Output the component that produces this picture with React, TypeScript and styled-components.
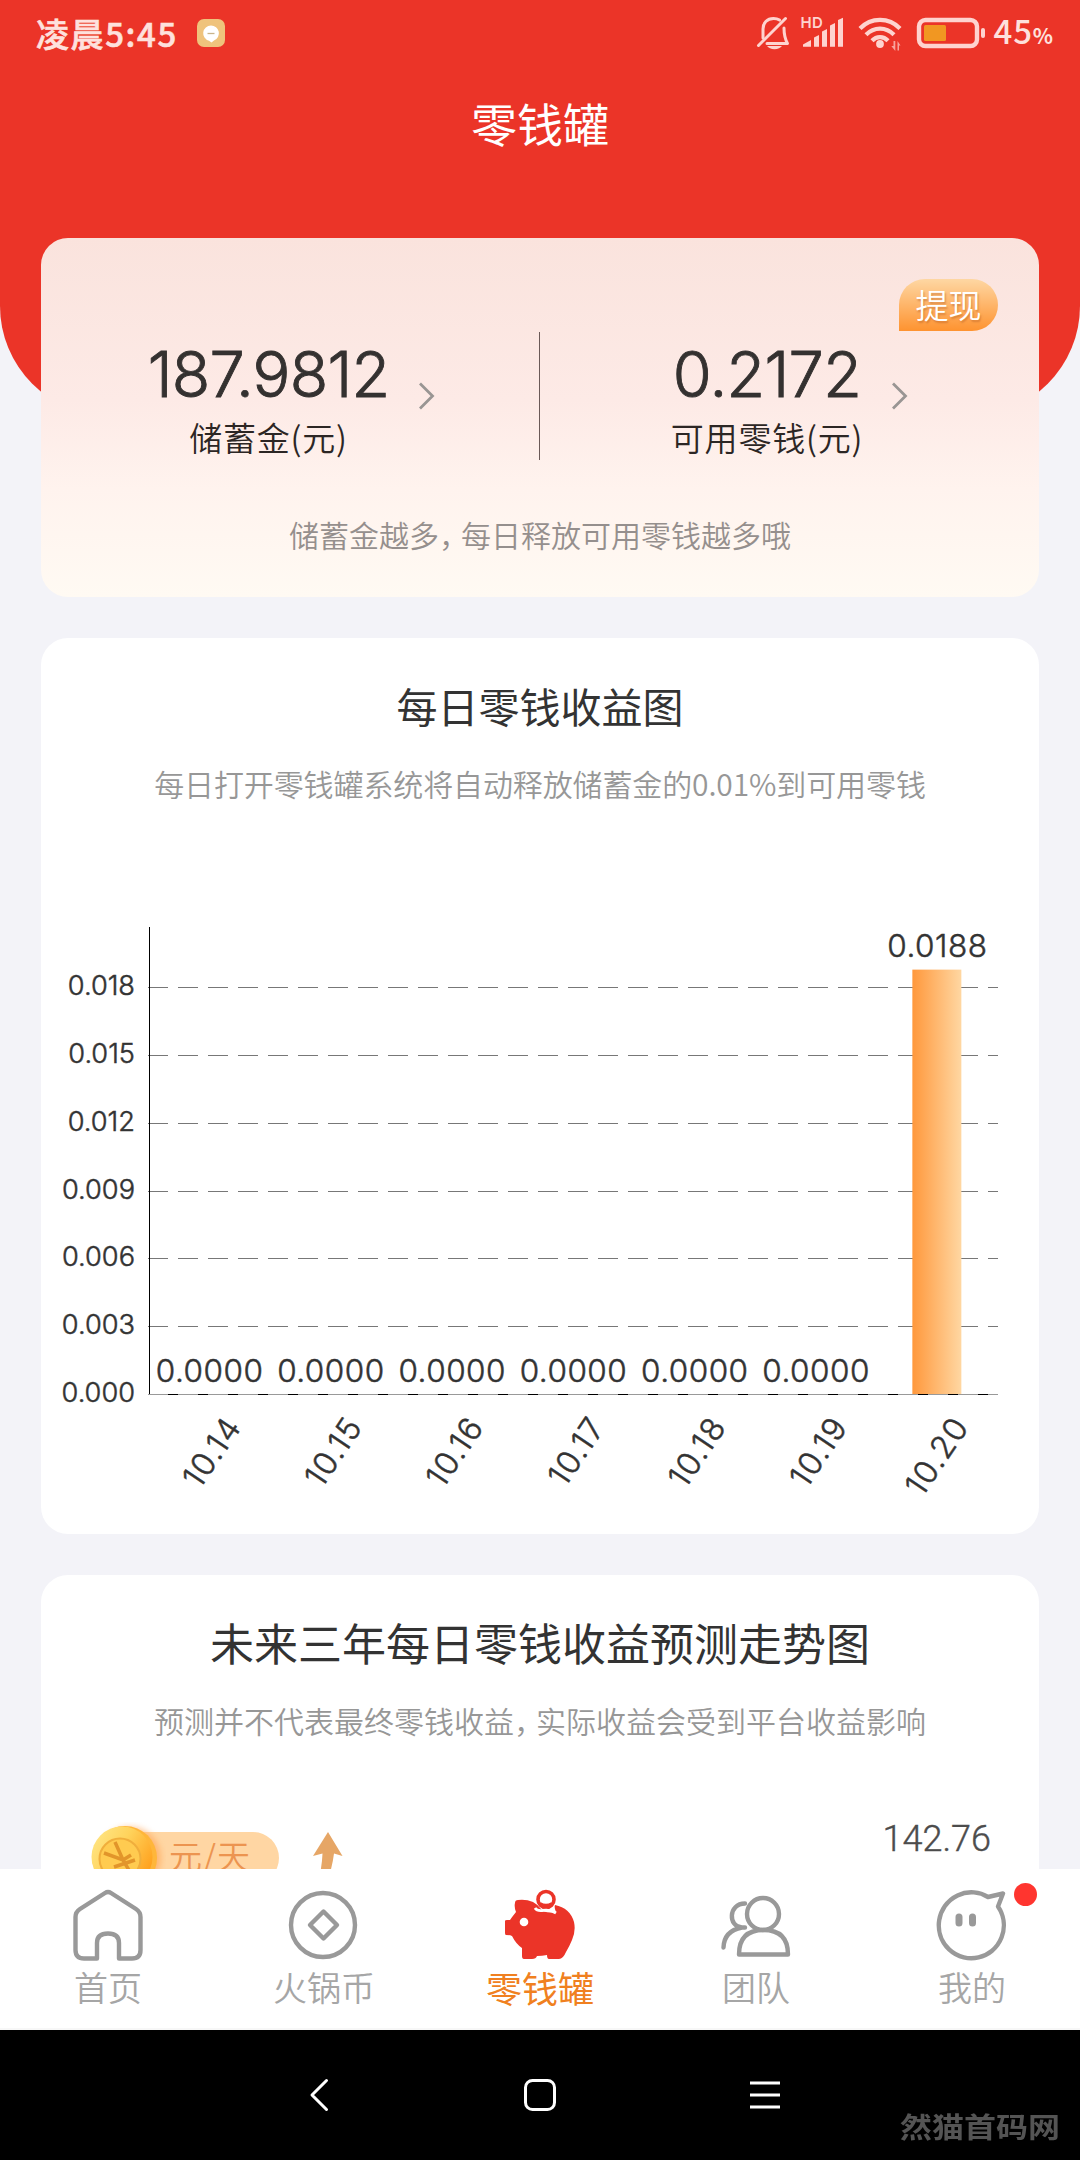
import React from 'react';
import styled, { createGlobalStyle } from 'styled-components';

const CJK = `"Noto Sans CJK SC", sans-serif`;
const NUM = `Inter, "Noto Sans CJK SC", sans-serif`;

const GlobalStyle = createGlobalStyle`
  * { box-sizing: border-box; }
  body { margin: 0; background: #f3f3f8; font-family: ${CJK}; }
  svg { display: block; flex: none; }
`;

const Screen = styled.div`
  width: 1080px;
  height: 2160px;
  display: flex;
  flex-direction: column;
  overflow: hidden;
`;

const Viewport = styled.main`
  height: 1869px;
  overflow: hidden;
  background: #f3f3f8;
`;

const Hero = styled.header`
  height: 416px;
  background: #eb3428;
  border-radius: 0 0 110px 110px;
`;

const StatusBar = styled.div`
  height: 66px;
  padding: 0 27px 0 36px;
  display: flex;
  justify-content: space-between;
  align-items: center;
  color: #fee1dd;
`;

const StatusSide = styled.div`
  display: flex;
  align-items: center;
`;

const Clock = styled.span`
  font: 500 33px/44px ${CJK};
  letter-spacing: 1.6px;
  -webkit-text-stroke: 0.6px #fee1dd;
  margin: -1px 0 0 0;
  width: 161px;
`;

const Percent = styled.span`
  display: flex;
  align-items: baseline;
  font: 500 33px/44px ${CJK};
  letter-spacing: 0.8px;
  margin: -1px 0 0 8px;
  small { font-size: 21px; font-weight: 700; letter-spacing: 0; }
`;

const PageTitle = styled.h1`
  margin: 33px 0 0;
  text-align: center;
  color: #fff;
  font: 400 46px/46px ${CJK};
`;

const Content = styled.div`
  margin-top: -178px;
  padding: 0 41px;
  display: flex;
  flex-direction: column;
  gap: 41px;
`;

const BalanceCard = styled.section`
  position: relative;
  height: 359px;
  border-radius: 27px;
  background: linear-gradient(180deg, #fae3dd 0%, #fdeae6 45%, #fff3ee 70%, #fffaf3 100%);
  padding-top: 94px;
`;

const WithdrawBadge = styled.button`
  position: absolute;
  top: 41px;
  right: 41px;
  width: 99px;
  height: 52px;
  padding: 0 0 2px;
  border: 0;
  border-radius: 27px 27px 27px 0;
  background: linear-gradient(180deg, #fed7a3 0%, #fe9330 100%);
  color: #fff;
  font: 350 33px/48px ${CJK};
  text-shadow: 1px 2px 2px rgba(190, 100, 40, 0.55);
`;

const Balances = styled.div`
  height: 128px;
  display: grid;
  grid-template-columns: 498px 1px 499px;
`;

const Separator = styled.i`
  background: #6a5957;
`;

const Balance = styled.div<{ $pad: number }>`
  display: flex;
  align-items: flex-start;
  padding-left: ${(p) => p.$pad}px;
`;

const BalanceText = styled.div<{ $w: number }>`
  width: ${(p) => p.$w}px;
  display: flex;
  flex-direction: column;
  align-items: center;
  white-space: nowrap;
`;

const Amount = styled.strong<{ $ls: number }>`
  font: 300 63px/84px ${NUM};
  -webkit-text-stroke: 0.9px #343130;
  letter-spacing: ${(p) => p.$ls}px;
  color: #343130;
`;

const AmountLabel = styled.span`
  margin-top: 1px;
  font: 350 33px/40px ${CJK};
  letter-spacing: 0.8px;
  color: #2c2624;
`;

const Chevron = styled.svg`
  margin: 49px 0 0 29px;
`;

const Hint = styled.p`
  margin: 54px 0 0;
  text-align: center;
  font: 350 30px/40px ${CJK};
  color: #958f8d;
`;

const Comma = styled.span`
  letter-spacing: -8px;
`;

const Card = styled.section<{ $h: number }>`
  height: ${(p) => p.$h}px;
  border-radius: 27px;
  background: #fff;
  padding-top: 37px;
`;

const CardTitle = styled.h2<{ $size: number }>`
  margin: 0;
  text-align: center;
  color: #333;
  font: 400 ${(p) => p.$size}px/60px ${CJK};
`;

const CardNote = styled.p<{ $tight?: boolean }>`
  margin: 28px 0 0;
  text-align: center;
  white-space: nowrap;
  color: #979797;
  font: 350 30px/40px ${CJK};
  letter-spacing: ${(p) => (p.$tight ? '-0.12px' : '0')};
`;

const ChartSvg = styled.svg`
  margin-top: 124px;
  fill: #333;
`;

const ChartText = styled.text`
  font-family: ${NUM};
  font-weight: 300;
  stroke: #333;
  stroke-width: 0.5px;
`;

const TrendRow = styled.div`
  margin-top: 85px;
  padding: 0 48px 0 51px;
  height: 80px;
  display: flex;
  align-items: flex-start;
`;

const UnitPill = styled.div`
  position: relative;
  margin-top: 7px;
  width: 187px;
  height: 52px;
  padding-left: 77px;
  border-radius: 26px;
  background: #ffd6a3;
  color: #ec9450;
  font: 350 33px/46px ${CJK};
  letter-spacing: 1px;
`;

const CoinSvg = styled.svg`
  position: absolute;
  left: -2px;
  top: -10px;
`;

const ArrowSvg = styled.svg`
  margin: 7px 0 0 34px;
`;

const Peak = styled.span`
  margin: -6px 0 0 auto;
  font: 300 36px/40px Roboto, sans-serif;
  -webkit-text-stroke: 0.4px #4c4c4c;
  color: #4c4c4c;
`;

const TabBar = styled.nav`
  height: 161px;
  background: #fff;
  border-bottom: 2px solid #f7f7f7;
  display: grid;
  grid-template-columns: repeat(5, 1fr);
`;

const Tab = styled.a<{ $active?: boolean }>`
  position: relative;
  display: flex;
  flex-direction: column;
  align-items: center;
  padding-top: 20px;
  font: ${(p) => (p.$active ? '400 36px' : '350 34px')}/50px ${CJK};
  color: ${(p) => (p.$active ? '#f08020' : '#a6a6a6')};
  span { margin-top: 1px; }
`;

const Dot = styled.i`
  position: absolute;
  left: 150px;
  top: 14px;
  width: 23px;
  height: 23px;
  border-radius: 50%;
  background: #ff352f;
`;

const SystemNav = styled.footer`
  position: relative;
  height: 130px;
  background: #000;
  display: flex;
  align-items: center;
  padding-left: 308px;
`;

const Gap = styled.i<{ $w: number }>`
  width: ${(p) => p.$w}px;
`;

const Watermark = styled.span`
  position: absolute;
  right: 20px;
  bottom: 15px;
  color: #545454;
  font: 700 32px/38px ${CJK};
  transform: scaleY(0.88);
`;

const DAYS = [
  ['10.14', 0], ['10.15', 0], ['10.16', 0], ['10.17', 0], ['10.18', 0], ['10.19', 0], ['10.20', 0.0188],
] as [string, number][];
const TICKS = [0, 0.003, 0.006, 0.009, 0.012, 0.015, 0.018];
const X0 = 108, X1 = 957, BASE = 467.5, STEP = 67.8;

function DailyChart() {
  const band = (X1 - X0) / DAYS.length;
  const yOf = (v: number) => BASE - (v / 0.003) * STEP;
  return (
    <ChartSvg width="998" height="600" viewBox="0 0 998 600">
      <defs>
        <linearGradient id="bar" x1="0" x2="1" y1="0" y2="0">
          <stop offset="0" stopColor="#ff983c" />
          <stop offset="1" stopColor="#ffd7a2" />
        </linearGradient>
      </defs>
      {TICKS.slice(1).map((t) => (
        <path key={t} d={`M${X0 - 1} ${Math.floor(yOf(t)) + 0.5}H${X1}`} stroke="#777" strokeDasharray="20 10" />
      ))}
      <path d={`M${X0 + 0.5} 0V${BASE + 0.5}`} stroke="#000" />
      {TICKS.map((t) => (
        <ChartText key={t} x="94" y={yOf(t) + 7.5} fontSize="27.200" textAnchor="end">{t.toFixed(3)}</ChartText>
      ))}
      {DAYS.map(([d, v], i) => {
        const cx = X0 + band * (i + 0.5);
        return (
          <g key={d}>
            {v > 0 && <rect x={cx - 25} y={yOf(v)} width="49" height={BASE - yOf(v)} fill="url(#bar)" />}
            <ChartText x={cx} y={yOf(v) - 13} fontSize="31.500" letterSpacing=".5" textAnchor="middle">{v.toFixed(4)}</ChartText>
            <ChartText transform={`translate(${cx + 33} ${BASE + 32}) rotate(-56)`} fontSize="32" letterSpacing="1.300" textAnchor="end">{d}</ChartText>
          </g>
        );
      })}
      <path d={`M${X0} ${BASE}H${X1}`} stroke="#000" />
      <path d={`M${X0 - 1} ${BASE}H${X1}`} stroke="#999" strokeDasharray="20 10" />
    </ChartSvg>
  );
}

const ChevronIcon = () => (
  <Chevron width="18" height="30" viewBox="0 0 18 30" fill="none" stroke="#999593" strokeWidth="2.800">
    <path d="M2 2.5L14.5 15L2 27.5" />
  </Chevron>
);

const line = { fill: 'none', stroke: '#999', strokeWidth: 4.4, strokeLinejoin: 'round', strokeLinecap: 'round' } as const;

function StatusIcons() {
  return (
    <svg width="230" height="44" viewBox="756 11 230 44" fill="#fed3cf">
      <g fill="none" stroke="#fed3cf" strokeWidth="3" strokeLinecap="round">
        <path d="M758.5 45.5L785.5 18.5" />
        <path d="M763 38V29c0-6 4-10.500 10.500-10.500 2.500 0 4.500.6 6 1.600" />
        <path d="M784 28c0 7 .5 10 3.500 15.500H767" strokeLinejoin="round" />
      </g>
      <path d="M767 46h15c-1.500 2-4 3.200-7.500 3.200s-6-1.200-7.500-3.200z" />
      <text x="800.5" y="28" fontSize="15" fontWeight="600" fontFamily="Inter, sans-serif" letterSpacing=".4">HD</text>
      <path d="M803 46.700V44.500L811 40V46.700zM814 46.700V37.500L819 35V46.700zM822 46.700V31.500L827 29V46.700zM830 46.700V25.500L835 23V46.700zM838 46.700V20L843 17.800V46.700z" />
      <g fill="none" stroke="#fed3cf" strokeWidth="4.200">
        <path d="M860 28.500C871 17 889 17 900 28.500" />
        <path d="M866 34.700c8-8.200 20-8.200 28 0" />
        <path d="M872 40.700c4.500-4.800 11.500-4.800 16 0" />
      </g>
      <circle cx="880" cy="44" r="3.900" />
      <path d="M893.500 41h1.800v10l-4-5h2.200zM897.500 41l3 4.500h-1.500v5h-1.500z" opacity=".7" />
      <rect x="919" y="20" width="58" height="26" rx="6.500" fill="none" stroke="#fed3cf" strokeWidth="4.400" />
      <rect x="924" y="25" width="22" height="16" rx="1.500" fill="#f19722" />
      <rect x="981" y="28" width="4" height="10" rx="2" />
    </svg>
  );
}

const Coin = () => (
  <CoinSvg width="76" height="76" viewBox="0 0 76 76">
    <defs>
      <linearGradient id="coinRim" x1="0" y1="0" x2="1" y2=".6">
        <stop offset="0" stopColor="#ffe98c" />
        <stop offset=".5" stopColor="#ffd35c" />
        <stop offset="1" stopColor="#ffa21f" />
      </linearGradient>
      <filter id="coinShade" x="-20%" y="-20%" width="150%" height="140%"><feGaussianBlur stdDeviation="3" /></filter>
    </defs>
    <circle cx="40" cy="36" r="31" fill="#ffa657" opacity=".65" filter="url(#coinShade)" />
    <circle cx="35" cy="36" r="32" fill="#ffb63a" />
    <circle cx="32" cy="35" r="30.500" fill="url(#coinRim)" />
    <circle cx="30" cy="37" r="20.500" fill="#ffcb50" stroke="#f0ae3c" strokeWidth="2" />
    <path d="M25 20L33 38L14 31M33 38L41 33M33 38L40 50M24 45L45 38" stroke="#e2952a" strokeWidth="3.500" fill="none" />
  </CoinSvg>
);

const Pig = () => (
  <svg width="72" height="72" viewBox="0 0 72 72">
    <path fill="#eb3428" d="M11 14Q11 11 14 11Q22 10 29 13Q33 15 37 20Q41 25 52 23Q50 19 51 16Q66 19 70 33Q72 42 68 51Q66 56 62 63Q59 70 55 70H45Q43 70 43 66Q38 67 33 67Q32 70 28 70H20Q18 70 18 67V59Q12 55 8 47Q6 46 2 46Q1 46 1 44V32Q1 31 3 31H6Q8 28 12 23Q10 18 11 14Z" />
    <circle cx="20" cy="33" r="4.300" fill="#fff" />
    <circle cx="42" cy="10.500" r="8" fill="#fff" stroke="#eb3428" strokeWidth="3.600" />
    <path d="M36 14.500Q42 18 48 14.500" stroke="#eb3428" strokeWidth="3" fill="none" />
    <path d="M31 19Q33 22 38 21.500Q46 20 52 24" stroke="#fff" strokeWidth="2.800" fill="none" />
  </svg>
);

export default function App() {
  return (
    <>
      <GlobalStyle />
      <Screen>
        <Viewport>
          <Hero>
            <StatusBar>
              <StatusSide>
                <Clock>凌晨5:45</Clock>
                <svg width="28" height="28" viewBox="0 0 28 28">
                  <rect width="28" height="28" rx="7" fill="#efc37c" />
                  <path d="M14 6.500a8 7.800 0 0 1 3 15L14.500 23.500L12 21.800A8 7.800 0 0 1 14 6.500z" fill="#fff" />
                  <path d="M10.500 14.500h7" stroke="#c9b48a" strokeWidth="1.300" />
                </svg>
              </StatusSide>
              <StatusSide>
                <StatusIcons />
                <Percent>45<small>%</small></Percent>
              </StatusSide>
            </StatusBar>
            <PageTitle>零钱罐</PageTitle>
          </Hero>
          <Content>
            <BalanceCard>
              <WithdrawBadge>提现</WithdrawBadge>
              <Balances>
                <Balance $pad={107}>
                  <BalanceText $w={241}>
                    <Amount $ls={-0.8}>187.9812</Amount>
                    <AmountLabel>储蓄金(元)</AmountLabel>
                  </BalanceText>
                  <ChevronIcon />
                </Balance>
                <Separator />
                <Balance $pad={132}>
                  <BalanceText $w={190}>
                    <Amount $ls={-0.7}>0.2172</Amount>
                    <AmountLabel>可用零钱(元)</AmountLabel>
                  </BalanceText>
                  <ChevronIcon />
                </Balance>
              </Balances>
              <Hint>储蓄金越多<Comma>，</Comma>每日释放可用零钱越多哦</Hint>
            </BalanceCard>

            <Card $h={896}>
              <CardTitle $size={41}>每日零钱收益图</CardTitle>
              <CardNote $tight>每日打开零钱罐系统将自动释放储蓄金的0.01%到可用零钱</CardNote>
              <DailyChart />
            </Card>

            <Card $h={500}>
              <CardTitle $size={44}>未来三年每日零钱收益预测走势图</CardTitle>
              <CardNote>预测并不代表最终零钱收益<Comma>，</Comma>实际收益会受到平台收益影响</CardNote>
              <TrendRow>
                <UnitPill><Coin />元/天</UnitPill>
                <ArrowSvg width="30" height="60" viewBox="0 0 30 60" fill="#e6a666">
                  <path d="M15 0L29.500 24L21 21.500Q19 38 12 55H4Q9 36 9.500 21.500L0 24Z" />
                </ArrowSvg>
                <Peak>142.76</Peak>
              </TrendRow>
            </Card>
          </Content>
        </Viewport>

        <TabBar>
          <Tab>
            <svg width="72" height="72" viewBox="0 0 72 72" {...line}>
              <path d="M25 69.500H12Q3.500 69.500 3.500 61V28Q3.500 23 8 20L33 4Q36 2 39 4L64 20Q68.500 23 68.500 28V61Q68.500 69.500 60 69.500H47V54Q47 44.500 36 44.500T25 54Z" stroke="none" />
              <path d="M25 69.500H12Q3.500 69.500 3.500 61V28Q3.500 23 8 20L33 4Q36 2 39 4L64 20Q68.500 23 68.500 28V61Q68.500 69.500 60 69.500H47V54Q47 44.500 36 44.500T25 54Z" />
            </svg>
            <span>首页</span>
          </Tab>
          <Tab>
            <svg width="72" height="72" viewBox="0 0 72 72" {...line}>
              <circle cx="35" cy="36" r="32" />
              <path d="M35.500 22.500L49 36L35.500 49.500L22 36Z" />
            </svg>
            <span>火锅币</span>
          </Tab>
          <Tab $active>
            <Pig />
            <span>零钱罐</span>
          </Tab>
          <Tab>
            <svg width="72" height="72" viewBox="0 0 72 72" {...line}>
              <circle cx="43" cy="25" r="16" />
              <path d="M19 65.500Q19 41 43.500 41T68 65.500Z" />
              <path d="M25 14.500C8 14.500 8 38 22 38.500H25M22 38.500Q4 42 3.500 58.500" />
            </svg>
            <span>团队</span>
          </Tab>
          <Tab>
            <Dot />
            <svg width="72" height="72" viewBox="-1 0 72 72" {...line}>
              <path d="M51 8A32.500 33 0 1 0 61 17.500L66 4.500Z" />
              <path d="M22 28v6M35.500 28v6" strokeWidth="7" />
            </svg>
            <span>我的</span>
          </Tab>
        </TabBar>

        <SystemNav>
          <svg width="22" height="36" viewBox="0 0 22 36" fill="none" stroke="#fff" strokeWidth="3" strokeLinecap="round" strokeLinejoin="round">
            <path d="M18.500 3.500L4 18L18.500 32.500" />
          </svg>
          <Gap $w={193} />
          <svg width="34" height="34" viewBox="0 0 34 34" fill="none" stroke="#fff" strokeWidth="3">
            <rect x="2.500" y="2.500" width="29" height="29" rx="7" />
          </svg>
          <Gap $w={193} />
          <svg width="30" height="30" viewBox="0 0 30 30" stroke="#fff" strokeWidth="3">
            <path d="M0 3H30M0 15H30M0 27H30" />
          </svg>
          <Watermark>然猫首码网</Watermark>
        </SystemNav>
      </Screen>
    </>
  );
}
